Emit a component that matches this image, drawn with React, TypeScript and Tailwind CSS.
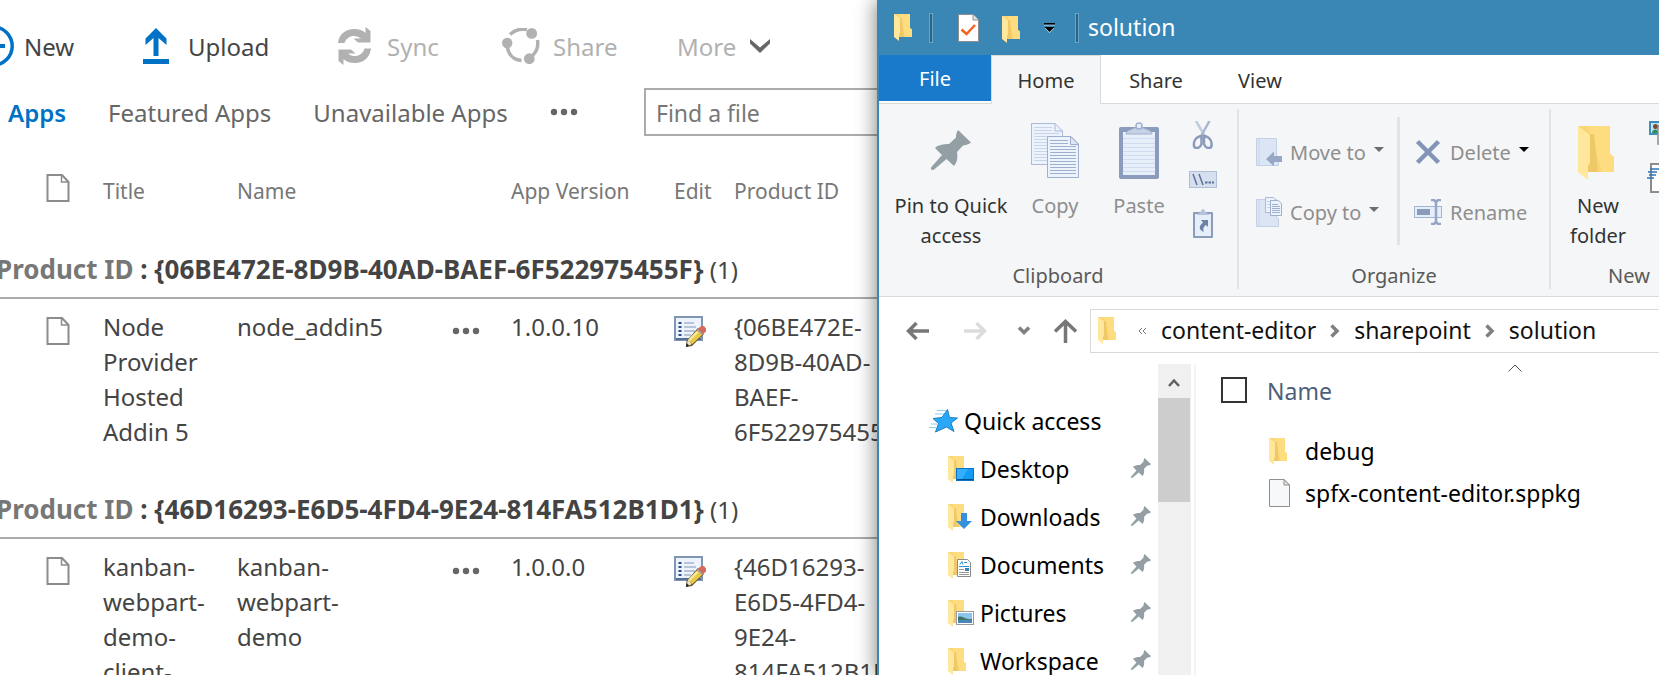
import React, { Fragment, ReactNode } from "react";

/* ---------- shared icons ---------- */

function FolderShape() {
  return (
    <>
      <path d="M0 0H16V14L18 15.5V23H4Z" fill="#f9d675" />
      <path d="M5 0H16V14L18 15.5V23H12Z" fill="#fddd7f" />
      <path d="M5 4V23H10L8 4Z" fill="#efc968" />
      <path d="M0 0L6 4.5V18.5L5 20V27L0 23Z" fill="#ffe79c" />
    </>
  );
}

function Folder({ className }: { className: string }) {
  return (
    <svg className={className} viewBox="0 0 18 27" aria-hidden="true">
      <FolderShape />
    </svg>
  );
}

function Pushpin({ className }: { className: string }) {
  return (
    <svg className={className} viewBox="0 0 40 40" fill="#939fa5" aria-hidden="true">
      <path d="M27 0L40 12.5C37 15 34 15 32 15.500L26 22C27 28 26 32 23 36L15.500 29L2.500 40L0 39.500L0 37.500L11 25L4 18C7 15 12 14 18 14L25 7.500C25 5 25.500 2 27 0Z" />
    </svg>
  );
}

function PageIcon() {
  return (
    <svg className="h-7 w-6" viewBox="0 0 24 28" fill="none" stroke="#8c8c8c" strokeWidth="2" aria-hidden="true">
      <path d="M1.500 1H16L22.500 8V27H1.500Z" />
      <path d="M15.500 1.500V8H22" strokeWidth="1.500" />
    </svg>
  );
}

function Dots() {
  return (
    <svg className="h-2 w-7" viewBox="0 0 28 8" fill="#666" aria-hidden="true">
      <circle cx="4" cy="4" r="3.200" />
      <circle cx="14" cy="4" r="3.200" />
      <circle cx="24" cy="4" r="3.200" />
    </svg>
  );
}

function Caret({ dark }: { dark?: boolean }) {
  return (
    <svg className="h-[5px] w-[10px]" viewBox="0 0 10 5" fill={dark ? "#000" : "#6d6d6d"} aria-hidden="true">
      <path d="M0 0H10L5 5Z" />
    </svg>
  );
}

function EditIcon() {
  return (
    <svg className="h-[31px] w-8" viewBox="0 0 32 31" aria-hidden="true">
      <rect x="1" y="1" width="27" height="23" fill="#edf3fb" stroke="#7f95b3" strokeWidth="2" />
      <path d="M2 23H27" stroke="#566f96" strokeWidth="2" />
      <path d="M10 7H20M10 11H22M10 15H21M10 19H17" stroke="#a6b4d0" strokeWidth="1.600" />
      <path d="M4.500 7H7.500M4.500 11H7.500M4.500 15H7.500M4.500 19H7.500" stroke="#2f4a86" strokeWidth="2" />
      <path d="M24 12L30 18L18 30L12 31L12.500 25Z" fill="#5d5330" />
      <path d="M23.500 14L28.500 18.500L18.500 28L14 24Z" fill="#e8c84a" />
      <path d="M22.500 15L24.500 16.500L15.500 25.500L14 24Z" fill="#f9ea9a" />
      <path d="M14 24L18 28L15 29.500L13 27Z" fill="#f2e3c4" />
      <path d="M12.500 27.500L15 30L12 31Z" fill="#222" />
      <path d="M23.500 13.500L27 10H30L32 12.500V15.500L28.500 18.500Z" fill="#d9695a" />
      <path d="M23.500 13.500L28.500 18.500" stroke="#9aa3b0" strokeWidth="1.500" />
    </svg>
  );
}

/* ---------- SharePoint page ---------- */

const SP_ITEMS = [
  {
    id: "06BE472E-8D9B-40AD-BAEF-6F522975455F",
    title: "Node Provider Hosted Addin 5",
    name: "node_addin5",
    version: "1.0.0.10",
  },
  {
    id: "46D16293-E6D5-4FD4-9E24-814FA512B1D1",
    title: "kanban-webpart-demo-client-side-solution",
    name: "kanban-webpart-demo",
    version: "1.0.0.0",
  },
];

function BreakableId({ id }: { id: string }) {
  const parts = `{${id}}`.split("-");
  return (
    <>
      {parts.map((p, i) => (
        <Fragment key={i}>
          {p}
          {i < parts.length - 1 && "-"}
          <wbr />
        </Fragment>
      ))}
    </>
  );
}

function SharePointPage() {
  return (
    <main className="min-w-0 overflow-hidden text-[24px] leading-[35px] text-[#444]">
      <div className="grid h-[88px] grid-cols-[143px_195px_164px_175px_auto] items-center pt-1 [&>button]:flex [&>button]:items-center">
        <button className="gap-[10px]">
          <svg className="h-[42px] w-[14px]" viewBox="28 0 14 42" fill="none" stroke="#0072c6" aria-hidden="true">
            <circle cx="21" cy="21" r="19.200" strokeWidth="3.500" />
            <path d="M10 21H33M21 10V32" strokeWidth="4" />
          </svg>
          New
        </button>
        <button className="gap-[19px]">
          <svg className="h-9 w-[26px]" viewBox="0 0 26 36" fill="#0072c6" aria-hidden="true">
            <path d="M13 0L23.500 10.500V17L15.500 10V28H10.500V10L2.500 17V10.500ZM0 31H26V36H0Z" />
          </svg>
          Upload
        </button>
        <button className="gap-4 text-[#b1b1b1]">
          <svg className="h-[38px] w-[33px]" viewBox="0 0 33 38" fill="#b1b1b1" aria-hidden="true">
            <path d="M0 16C1 7 8 2 16 2C21 2 25 3.500 27.500 6L27.500 0L32.500 4V15.500H20L15.500 11.500H23C17 6.500 8.500 9 6.500 16Z" />
            <path d="M33 21.500C32 31 25 36 17 36C12 36 8 34.500 5.500 32V38L0.500 34V22.500H13L17.500 26.500H10C16 31.500 24.500 29 26.500 21.500Z" />
          </svg>
          Sync
        </button>
        <button className="gap-[13px] text-[#b1b1b1]">
          <svg className="h-9 w-[38px]" viewBox="0 0 38 36" fill="#b1b1b1" aria-hidden="true">
            <circle cx="5.200" cy="15" r="5.200" />
            <circle cx="29.700" cy="5.400" r="5.400" />
            <circle cx="27.300" cy="30.700" r="5.400" />
            <path d="M8 6.500C13 1.500 19 0.500 25 1.500" fill="none" stroke="#b1b1b1" strokeWidth="3.500" />
            <path d="M35.500 12C36.500 18 34.500 24 30 28" fill="none" stroke="#b1b1b1" strokeWidth="3.500" />
            <path d="M5 17C6 26 11 32 19.500 32.500" fill="none" stroke="#b1b1b1" strokeWidth="3.500" />
          </svg>
          Share
        </button>
        <button className="gap-[14px] text-[#b1b1b1]">
          More
          <svg className="h-[14px] w-5" viewBox="0 0 20 14" fill="#666" aria-hidden="true">
            <path d="M0 0L10 8.500L20 0V4.500L10 14L0 4.500Z" />
          </svg>
        </button>
      </div>

      <div className="flex h-12 items-center whitespace-nowrap text-[#666]">
        <nav className="flex w-[644px] shrink-0 items-center gap-[42px] pl-2">
          <a href="#apps" className="font-semibold text-[#0072c6]">
            Apps
          </a>
          <a href="#featured">Featured Apps</a>
          <a href="#unavailable">Unavailable Apps</a>
          <button aria-label="More views" className="flex">
            <Dots />
          </button>
        </nav>
        <input
          type="text"
          aria-label="Find a file"
          placeholder="Find a file"
          className="h-12 w-[300px] shrink-0 border-2 border-[#ababab] px-[10px] pt-[2px] text-[23px] placeholder:text-[#777]"
        />
      </div>

      <table className="w-[904px] table-fixed border-separate border-spacing-0 text-left">
        <colgroup>
          <col className="w-[46px]" />
          <col className="w-[57px]" />
          <col className="w-[134px]" />
          <col className="w-[215px]" />
          <col className="w-[59px]" />
          <col className="w-[163px]" />
          <col className="w-[60px]" />
          <col />
        </colgroup>
        <thead className="text-[21px] text-[#777]">
          <tr className="[&>th]:p-0 [&>th]:pt-[38px] [&>th]:pb-[2px] [&>th]:align-top [&>th]:font-normal">
            <th />
            <th>
              <PageIcon />
            </th>
            <th>Title</th>
            <th>Name</th>
            <th />
            <th>App Version</th>
            <th>Edit</th>
            <th>Product ID</th>
          </tr>
        </thead>
        {SP_ITEMS.map((it) => (
          <tbody key={it.id}>
            <tr>
              <th
                colSpan={8}
                className="h-[88px] border-b-2 border-[#ababab] p-0 pb-[10px] align-bottom font-normal whitespace-nowrap"
              >
                <div className="-ml-1">
                  <b className="text-[26px]">
                    <span className="text-[#777]">Product ID</span> : {`{${it.id}}`}
                  </b>{" "}
                  (1)
                </div>
              </th>
            </tr>
            <tr className="[&>td]:p-0 [&>td]:pt-[10px] [&>td]:pb-[2px] [&>td]:align-top">
              <td />
              <td>
                <div className="flex h-11 items-center">
                  <PageIcon />
                </div>
              </td>
              <td>
                <div className="pr-5">{it.title}</div>
              </td>
              <td>
                <div className="pr-[58px]">{it.name}</div>
              </td>
              <td>
                <button aria-label="Open menu" className="flex h-11 items-center">
                  <Dots />
                </button>
              </td>
              <td>{it.version}</td>
              <td>
                <button aria-label="Edit" className="flex h-11 items-center">
                  <EditIcon />
                </button>
              </td>
              <td>
                <BreakableId id={it.id} />
              </td>
            </tr>
          </tbody>
        ))}
      </table>
    </main>
  );
}

/* ---------- Explorer ribbon ---------- */

function RibbonGroup({ label, className, children }: { label: string; className: string; children: ReactNode }) {
  return (
    <section className={`flex shrink-0 flex-col justify-between pb-[5px] ${className}`}>
      <div className="flex">{children}</div>
      <div className="text-center leading-[30px] text-[#5a5a5a]">{label}</div>
    </section>
  );
}

function BigButton({
  icon,
  className,
  children,
}: {
  icon: ReactNode;
  className: string;
  children: ReactNode;
}) {
  return (
    <button className={`mt-4 flex flex-col items-center gap-[11px] leading-[30px] ${className}`}>
      <span className="flex h-[60px] items-center">{icon}</span>
      <span>{children}</span>
    </button>
  );
}

function SmallButton({ icon, label, caret }: { icon: ReactNode; label: string; caret?: ReactNode }) {
  return (
    <button className="flex h-[60px] items-center gap-2 whitespace-nowrap text-[#8e8e8e]">
      {icon}
      <span className="pt-[2px]">{label}</span>
      {caret && <span className="pb-[6px]">{caret}</span>}
    </button>
  );
}

function CopyIcon() {
  const back = [5, 8, 11, 14, 17, 20, 23, 26, 29, 32, 35, 38];
  const front = [17, 20, 23, 26, 29, 32, 35, 38, 41, 44, 47, 50];
  return (
    <svg className="h-[55px] w-12" viewBox="0 0 48 55" fill="none" aria-hidden="true">
      <path d="M.5 .5H24L31.500 8V41.500H.5Z" fill="#edf3fc" stroke="#a9b9d6" />
      <path d="M24 .5V8H31.500" stroke="#a9b9d6" />
      {back.map((y) => (
        <path key={y} d={y < 10 ? `M3 ${y - 0.5}H21` : `M3 ${y - 0.5}H28`} stroke="#c8d4e8" />
      ))}
      <path d="M16.500 13.500H40L47.500 21V54.500H16.500Z" fill="#edf3fc" stroke="#9fb0cf" />
      <path d="M39.500 13.500V21.500H47.500Z" fill="#dde7f5" stroke="#9fb0cf" />
      {front.map((y) => (
        <path key={y} d={y < 22 ? `M19 ${y + 0.5}H37` : `M19 ${y + 0.5}H45`} stroke="#9fb0cf" />
      ))}
    </svg>
  );
}

function PasteIcon() {
  const rows = [16, 21, 25, 29, 33, 37, 41, 45, 49];
  return (
    <svg className="h-[57px] w-10" viewBox="0 0 40 57" fill="none" aria-hidden="true">
      <rect x="0" y="5" width="40" height="52" rx="2" fill="#8a9bbb" />
      <rect x="4" y="10" width="32" height="43" fill="#e6eefa" />
      {rows.map((y) => (
        <path key={y} d={`M4 ${y + 0.5}H36`} stroke="#cfdcef" />
      ))}
      <path d="M7 12C7 8 13 8 15 6H25C27 8 33 8 33 12Z" fill="#c5d2e6" stroke="#9fb0cc" />
      <circle cx="20" cy="4" r="3" fill="#e6eefa" stroke="#9fb0cc" strokeWidth="1.500" />
    </svg>
  );
}

function ScissorsIcon() {
  return (
    <svg className="h-7 w-7" viewBox="0 0 28 28" fill="none" aria-hidden="true">
      <path d="M7 0L17 17" stroke="#c0cce0" strokeWidth="2.500" />
      <path d="M20.500 0L11 17" stroke="#a9b7d0" strokeWidth="2.500" />
      <path d="M12.500 15C6 16 4.500 21 5 25C6 28 11 28 12.500 23Z" stroke="#8a9bbb" strokeWidth="2.500" />
      <path d="M15 15C21.500 16 23 21 22.500 25C21.500 28 16.500 28 15 23Z" stroke="#8a9bbb" strokeWidth="2.500" />
    </svg>
  );
}

function PathIcon() {
  return (
    <svg className="h-[17px] w-7" viewBox="0 0 28 17" fill="none" aria-hidden="true">
      <rect x=".5" y=".5" width="27" height="16" fill="#d5dfee" stroke="#b0bfd8" />
      <path d="M4 3L8 14M10 3L14 14" stroke="#5d7199" strokeWidth="1.500" />
      <path d="M16 11.500H18.500M19.500 11.500H22M23 11.500H25" stroke="#5d7199" strokeWidth="2" />
    </svg>
  );
}

function PasteShortcutIcon() {
  return (
    <svg className="h-[29px] w-5" viewBox="0 0 20 29" aria-hidden="true">
      <rect x="0" y="3" width="20" height="26" rx="1" fill="#8a9bbb" />
      <rect x="2" y="5" width="16" height="22" fill="#e6eefa" />
      <path d="M4 6C4 4 8 4 8 2C8 -.5 12 -.5 12 2C12 4 16 4 16 6Z" fill="#b4c2da" />
      <path d="M8 11H15V18L13 16C10.500 18 9.500 20 11 23C6 21 5 17.500 10 13.500Z" fill="#6f82a8" />
    </svg>
  );
}

function MoveIcon() {
  return (
    <svg className="h-7 w-[26px]" viewBox="0 0 26 28" fill="none" aria-hidden="true">
      <path d="M.5 .5H20.500V18L22.500 20V27.500H.5Z" fill="#dbe5f4" stroke="#c3d0e6" />
      <path d="M3 1V27" stroke="#c9d6ea" />
      <path d="M10 21L18 13.500V18H26V24H18V28.500Z" fill="#97a8c6" />
    </svg>
  );
}

function CopyToIcon() {
  return (
    <svg className="h-[30px] w-[26px]" viewBox="0 0 26 30" fill="none" aria-hidden="true">
      <path d="M.5 2.500H20.500V20L22.500 22V29.500H.5Z" fill="#dbe5f4" stroke="#c3d0e6" />
      <path d="M3 3V29" stroke="#c9d6ea" />
      <path d="M9.500 .5H17.500L20.500 3.500V15.500H9.500Z" fill="#edf3fc" stroke="#a9b9d6" />
      <path d="M11 4.500H17M11 7.500H17M11 10.500H17" stroke="#c8d4e8" />
      <path d="M14.500 3.500H22.500L25.500 6.500V18.500H14.500Z" fill="#edf3fc" stroke="#9fb0cf" />
      <path d="M16 7.500H22M16 9.500H24M16 11.500H24M16 13.500H24M16 15.500H24" stroke="#9fb0cf" />
    </svg>
  );
}

function DeleteIcon() {
  return (
    <svg className="h-[26px] w-7" viewBox="-2 0 28 26" stroke="#8294b8" strokeWidth="4.500" aria-hidden="true">
      <path d="M1.500 2.500L22.500 23.500M22.500 2.500L1.500 23.500" />
    </svg>
  );
}

function RenameIcon() {
  return (
    <svg className="h-[26px] w-7" viewBox="0 0 28 26" fill="none" aria-hidden="true">
      <rect x=".5" y="7.500" width="27" height="11" fill="#e6eefa" stroke="#a4b5d2" />
      <rect x="3" y="10" width="13" height="6" fill="#8a9bbb" />
      <path d="M17 1H20L22 3L24 1H27M17 25H20L22 23L24 25H27M22 3V23" stroke="#94a6c6" strokeWidth="2.500" />
    </svg>
  );
}

function Ribbon() {
  return (
    <div className="flex h-[193px] border-b border-[#d9dadb] bg-[#f5f6f7] text-[20px]">
      <RibbonGroup label="Clipboard" className="w-[358px]">
        <BigButton className="ml-3 w-[120px] text-[#333]" icon={<Pushpin className="size-10" />}>
          Pin to Quick access
        </BigButton>
        <BigButton className="ml-[2px] w-[84px] text-[#8e8e8e]" icon={<CopyIcon />}>
          Copy
        </BigButton>
        <BigButton className="w-[84px] text-[#8e8e8e]" icon={<PasteIcon />}>
          Paste
        </BigButton>
        <div className="ml-2 flex w-7 flex-col items-center pt-[9px] [&>button]:flex [&>button]:h-11 [&>button]:items-center">
          <button aria-label="Cut">
            <ScissorsIcon />
          </button>
          <button aria-label="Copy path">
            <PathIcon />
          </button>
          <button aria-label="Paste shortcut">
            <PasteShortcutIcon />
          </button>
        </div>
      </RibbonGroup>
      <div className="mt-[5px] mb-[7px] w-[2px] shrink-0 bg-[#e2e3e4]" />
      <RibbonGroup label="Organize" className="w-[310px]">
        <div className="w-[158px] pt-[18px] pl-[17px]">
          <SmallButton icon={<MoveIcon />} label="Move to" caret={<Caret />} />
          <SmallButton icon={<CopyToIcon />} label="Copy to" caret={<Caret />} />
        </div>
        <div className="mt-[13px] h-32 w-[3px] bg-[#e2e3e4]" />
        <div className="pt-[18px] pl-[14px]">
          <SmallButton icon={<DeleteIcon />} label="Delete" caret={<Caret dark />} />
          <SmallButton icon={<RenameIcon />} label="Rename" />
        </div>
      </RibbonGroup>
      <div className="mt-[5px] mb-[7px] w-[2px] shrink-0 bg-[#e2e3e4]" />
      <RibbonGroup label="New" className="w-[156px]">
        <BigButton className="w-[94px] text-[#333]" icon={<Folder className="mt-[6px] mr-1 h-[54px] w-9" />}>
          New
          <br />
          folder
        </BigButton>
        <div className="flex flex-col gap-[18px] pt-[17px]">
          <button aria-label="New item" className="ml-1 flex">
            <svg className="h-6 w-8" viewBox="0 0 32 24" fill="none" aria-hidden="true">
              <rect x="1" y="1" width="24" height="12" fill="#bfe3f7" stroke="#3d8dbd" strokeWidth="2" />
              <circle cx="6.500" cy="5.500" r="2.500" fill="#7a4b2e" />
              <path d="M3 12C3 8 9 7 9 12Z" fill="#2f8f5b" />
              <rect x="9" y="5" width="22" height="18" fill="#fff" stroke="#8c8c8c" strokeWidth="1.500" />
            </svg>
          </button>
          <button aria-label="Easy access" className="flex">
            <svg className="h-[30px] w-8" viewBox="0 0 32 30" fill="none" aria-hidden="true">
              <rect x="6" y="1" width="24" height="28" fill="#fff" stroke="#8c8c8c" strokeWidth="2" />
              <path d="M5 6H14M3 9H12M4 12H11M2 15H9" stroke="#2f74b5" strokeWidth="1.700" />
            </svg>
          </button>
        </div>
      </RibbonGroup>
    </div>
  );
}

/* ---------- Explorer body ---------- */

const OVERLAYS: Record<string, ReactNode> = {
  Desktop: (
    <>
      <rect x="8.500" y="12.500" width="17" height="12" fill="#139cf5" stroke="#0a74c4" />
      <path d="M9 23.500H25" stroke="#064f8c" />
      <path d="M9 13H20L14 23H9Z" fill="#35aefb" />
    </>
  ),
  Downloads: <path d="M13 9H19V17H24L16 25L8 17H13Z" fill="#3490de" />,
  Documents: (
    <>
      <path d="M9.500 7.500H19.500L22.500 10.500V24.500H9.500Z" fill="#fff" stroke="#8b8b8b" />
      <path d="M12 12.500L14 9.500L15 12.500M16 10.500H19M11 14.500H21" stroke="#2e8fd0" fill="none" />
      <path d="M11 17.500H16M11 20.500H21M11 22.500H21" stroke="#9a9a9a" />
      <rect x="17" y="16" width="4" height="3" fill="#3b7fae" />
    </>
  ),
  Pictures: (
    <>
      <rect x="8.500" y="11.500" width="17" height="13" fill="#fff" stroke="#9a9a9a" />
      <rect x="10" y="13" width="14" height="10" fill="#8fc4ee" />
      <path d="M10 17C14 15 17 20 24 19V21H10Z" fill="#3f7363" />
      <rect x="10" y="20" width="14" height="3" fill="#4b86b8" />
    </>
  ),
  Workspace: null,
};

function Sidebar() {
  return (
    <nav className="w-[279px] shrink-0 overflow-hidden pt-[33px] text-[23px] leading-[48px] text-black">
      <a href="#quick" className="flex h-12 items-center gap-[6px] pl-[50px]">
        <svg className="h-[24px] w-[29px]" viewBox="0 0 29 24" aria-hidden="true">
          <path d="M8 1.500H17M6 5H15M2 15H8M0 18.500H7" stroke="#8ccdf6" strokeWidth="1" />
          <path
            d="M18.500 .5L20.500 8.500L28.500 9L22 14L25 22.500L17.500 18L6.500 23L9.500 14.500L4 9.500L13 8.500Z"
            fill="#2ba7f7"
            stroke="#1680c9"
          />
        </svg>
        Quick access
      </a>
      {Object.keys(OVERLAYS).map((name) => (
        <a key={name} href={`#${name}`} className="flex h-12 items-center pr-[7px] pl-[69px]">
          <svg className="mr-[6px] h-[27px] w-[26px]" viewBox="0 0 26 27" aria-hidden="true">
            <FolderShape />
            {OVERLAYS[name]}
          </svg>
          <span className="flex-1">{name}</span>
          <Pushpin className="mb-[2px] size-5" />
        </a>
      ))}
    </nav>
  );
}

function ScrollBar() {
  return (
    <div className="w-[33px] shrink-0 bg-[#f0f0f0]">
      <button aria-label="Scroll up" className="flex h-[34px] w-8 items-center justify-center pt-1">
        <svg className="h-[10px] w-3" viewBox="0 0 12 10" fill="none" stroke="#606060" strokeWidth="2.500" aria-hidden="true">
          <path d="M1 8L6 2.500L11 8" />
        </svg>
      </button>
      <div className="h-[104px] w-8 bg-[#cdcdcd]" />
    </div>
  );
}

function FileIcon() {
  return (
    <svg className="h-7 w-[21px]" viewBox="0 0 21 28" aria-hidden="true">
      <path d="M.5 .5H15L20.500 6V27.500H.5Z" fill="#f6f8f9" stroke="#8f8f8f" />
      <path d="M15 .5V6H20.500Z" fill="#e2e2e2" stroke="#8f8f8f" />
    </svg>
  );
}

function FileList() {
  return (
    <div className="min-w-0 flex-1 overflow-hidden border-l-2 border-[#f3f3f3] text-[23px]">
      <table className="w-[567px] table-fixed border-separate border-spacing-0 text-left leading-[30px]">
        <colgroup>
          <col className="w-[71px]" />
          <col />
        </colgroup>
        <thead>
          <tr>
            <th className="h-[66px] p-0 pt-[13px] pl-[25px] align-top">
              <input
                type="checkbox"
                aria-label="Select all"
                className="block size-[26px] appearance-none border-2 border-[#333] bg-white"
              />
            </th>
            <th className="relative p-0 pt-3 align-top font-normal text-[#4c607a]">
              <svg
                className="absolute top-0 left-1/2 h-2 w-[14px] -translate-x-1/2"
                viewBox="0 0 14 8"
                fill="none"
                stroke="#555"
                aria-hidden="true"
              >
                <path d="M.5 7.500L7 1L13.500 7.500" />
              </svg>
              Name
            </th>
          </tr>
        </thead>
        <tbody className="text-black">
          <tr>
            <td />
            <td className="p-0">
              <div className="flex h-[42px] items-center">
                <span className="w-[38px] pl-[2px]">
                  <Folder className="h-[27px] w-[18px]" />
                </span>
                debug
              </div>
            </td>
          </tr>
          <tr>
            <td />
            <td className="p-0">
              <div className="flex h-[42px] items-center">
                <span className="w-[38px] pl-[2px]">
                  <FileIcon />
                </span>
                spfx-content-editor.sppkg
              </div>
            </td>
          </tr>
        </tbody>
      </table>
    </div>
  );
}

function NavArrow({ faded }: { faded?: boolean }) {
  return (
    <svg
      className={faded ? "h-[18px] w-[23px] -scale-x-100" : "h-[18px] w-[23px]"}
      viewBox="0 0 23 18"
      fill="none"
      stroke={faded ? "#dcdcdc" : "#777"}
      strokeWidth="3.500"
      aria-hidden="true"
    >
      <path d="M23 9H3M10.500 1L2.500 9L10.500 17" />
    </svg>
  );
}

function Crumb() {
  return (
    <svg className="h-[14px] w-[10px]" viewBox="0 0 10 14" fill="none" stroke="#808080" strokeWidth="3.500" aria-hidden="true">
      <path d="M1.500 1.500L7 7L1.500 12.500" />
    </svg>
  );
}

function AddressRow() {
  return (
    <div className="flex h-[67px] items-center">
      <div className="flex w-[211px] shrink-0 items-center pl-[27px]">
        <button aria-label="Back">
          <NavArrow />
        </button>
        <button aria-label="Forward" className="ml-[35px]">
          <NavArrow faded />
        </button>
        <button aria-label="Recent locations" className="ml-[31px]">
          <svg className="h-[9px] w-3" viewBox="0 0 12 9" fill="none" stroke="#808080" strokeWidth="3.500" aria-hidden="true">
            <path d="M1 1.500L6 6.500L11 1.500" />
          </svg>
        </button>
        <button aria-label="Up" className="ml-6">
          <svg className="h-6 w-[23px]" viewBox="0 0 23 24" fill="none" stroke="#777" strokeWidth="3.500" aria-hidden="true">
            <path d="M11.500 24V3M1 12.500L11.500 2.500L22 12.500" />
          </svg>
        </button>
      </div>
      <div className="flex h-11 min-w-0 flex-1 items-center gap-[14px] overflow-hidden border border-r-0 border-[#d9d9d9] pl-[7px] text-[23px] whitespace-nowrap text-[#111]">
        <Folder className="h-[27px] w-[18px] shrink-0" />
        <svg className="ml-2 h-2 w-[9px] shrink-0" viewBox="0 0 9 8" fill="none" stroke="#777" aria-hidden="true">
          <path d="M4 1L1 4L4 7M8 1L5 4L8 7" />
        </svg>
        <a href="#content-editor">content-editor</a>
        <Crumb />
        <a href="#sharepoint">sharepoint</a>
        <Crumb />
        <a href="#solution">solution</a>
      </div>
    </div>
  );
}

function TitleBar() {
  const separator = <span className="h-[30px] w-[4px] border border-[#6aa6ca] bg-[#2c6488]" />;
  return (
    <header className="flex h-[55px] shrink-0 items-center bg-[#3a86b5] pl-[15px] text-[23px] text-white">
      <Folder className="h-[27px] w-[18px]" />
      <span className="ml-[17px] flex">{separator}</span>
      <button aria-label="Properties" className="ml-[25px]">
        <svg className="h-7 w-[21px]" viewBox="0 0 21 28" fill="none" aria-hidden="true">
          <path d="M.5 .5H15L20.500 6V27.500H.5Z" fill="#fff" stroke="#8f8f8f" />
          <path d="M15 .5V6H20.500" fill="#e2e2e2" stroke="#8f8f8f" />
          <path d="M3.500 15.500L8.500 20L17 11" stroke="#f4641e" strokeWidth="2.500" />
        </svg>
      </button>
      <button aria-label="New folder" className="ml-[23px] pt-1">
        <Folder className="h-[27px] w-[18px]" />
      </button>
      <button aria-label="Customize toolbar" className="ml-6">
        <svg className="h-[10px] w-[11px]" viewBox="0 0 11 10" aria-hidden="true">
          <path d="M0 1.500H11V2.500H0ZM.5 5L5.500 10L10.500 5" fill="#fff" fillOpacity=".7" />
          <path d="M0 0H11V1.500H0ZM.5 4H10.500L5.500 9Z" fill="#000" />
        </svg>
      </button>
      <span className="ml-5 flex">{separator}</span>
      <h1 className="ml-[9px]">solution</h1>
    </header>
  );
}

function ExplorerWindow() {
  return (
    <section className="relative flex min-w-0 flex-col overflow-hidden border-l-2 border-[#3a86b5] bg-white">
      <TitleBar />
      <div className="flex h-[49px] shrink-0 text-[20px] text-[#333]" role="tablist">
        <div className="w-28 border-b border-[#d9dadb]">
          <button role="tab" className="h-[46px] w-full bg-[#1979ca] pt-[2px] text-white">
            File
          </button>
        </div>
        <button role="tab" aria-selected="true" className="w-[110px] border-x border-t border-[#d9dadb] bg-[#f5f6f7] pt-[2px]">
          Home
        </button>
        <button role="tab" className="w-[110px] border-b border-[#d9dadb] pt-1">
          Share
        </button>
        <button role="tab" className="w-[98px] border-b border-[#d9dadb] pt-1">
          View
        </button>
        <div className="flex-1 border-b border-[#d9dadb]" />
      </div>
      <Ribbon />
      <AddressRow />
      <div className="flex min-h-0 flex-1">
        <Sidebar />
        <ScrollBar />
        <div className="w-[3px] shrink-0" />
        <FileList />
      </div>
    </section>
  );
}

export default function App() {
  return (
    <div className="grid h-screen grid-cols-[877fr_782fr] grid-rows-[100%] overflow-hidden bg-white font-['Noto_Sans','Open_Sans',sans-serif]">
      <SharePointPage />
      <div className="relative grid min-w-0 shadow-[-2px_0_18px_rgba(0,0,0,0.45)]">
        <ExplorerWindow />
      </div>
    </div>
  );
}
